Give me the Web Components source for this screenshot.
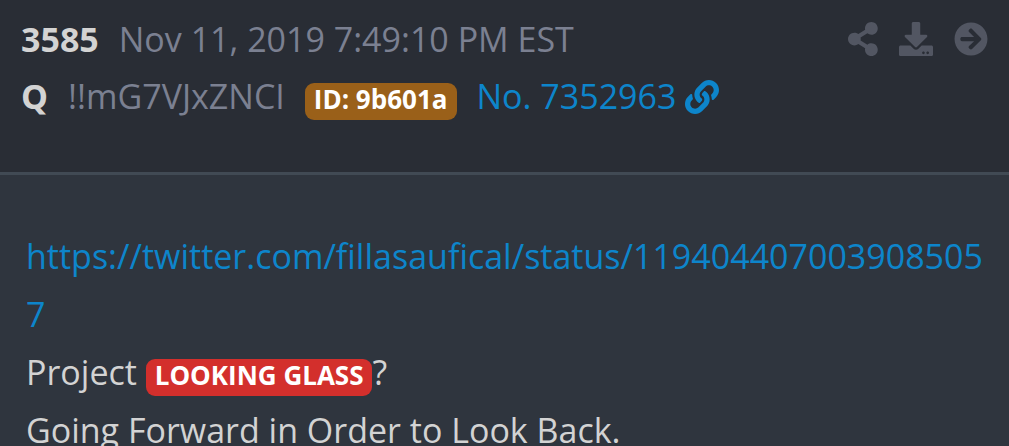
<!DOCTYPE html>
<html lang="en">
<head>
<meta charset="utf-8">
<meta name="viewport" content="width=device-width, initial-scale=1">
<title>3585</title>
<style>
	:root {
		--head: #292d35;
		--body: #2f353e;
		--line: #414a54;
		--text: #d3d3d3;
		--muted: #7b8091;
		--link: #0d85cb;
		--icon: #525662;
	}
	body {
		margin: 0;
		background: var(--body);
		color: var(--text);
		font: 34px/58px "Open Sans", sans-serif;
	}
</style>
</head>
<body>

<post-card>
	<post-header slot="header" number="3585" date="Nov 11, 2019 7:49:10 PM EST" name="Q" trip="!!mG7VJxZNCI" user="9b601a" post="7352963"></post-header>
	<post-link href="https://twitter.com/fillasaufical/status/1194044070039085057">https://twitter.com/fillasaufical/status/1194044070039085057</post-link>
	<div>Project <post-badge style="--badge: #d32f2c">LOOKING GLASS</post-badge>?</div>
	<div>Going Forward in Order to Look Back.</div>
</post-card>

<script>
const icons = {
	share: ["0 0 448 512", "M352 320c-22.608 0-43.387 7.819-59.79 20.895l-102.486-64.054a96.551 96.551 0 0 0 0-41.683l102.486-64.054C308.613 184.181 329.392 192 352 192c53.019 0 96-42.981 96-96S405.019 0 352 0s-96 42.981-96 96c0 7.158.79 14.13 2.276 20.841L155.79 180.895C139.387 167.819 118.608 160 96 160c-53.019 0-96 42.981-96 96s42.981 96 96 96c22.608 0 43.387-7.819 59.79-20.895l102.486 64.054A96.301 96.301 0 0 0 256 416c0 53.019 42.981 96 96 96s96-42.981 96-96-42.981-96-96-96z"],
	download: ["0 0 512 512", "M216 0h80c13.3 0 24 10.7 24 24v168h87.7c17.8 0 26.7 21.5 14.1 34.1L269.7 378.3c-7.5 7.5-19.8 7.5-27.3 0L90.1 226.1c-12.6-12.6-3.7-34.1 14.1-34.1H192V24c0-13.3 10.7-24 24-24zm296 376v112c0 13.3-10.7 24-24 24H24c-13.3 0-24-10.7-24-24V376c0-13.3 10.7-24 24-24h146.7l49 49c20.1 20.1 52.5 20.1 72.6 0l49-49H488c13.3 0 24 10.7 24 24zm-124 88c0-11-9-20-20-20s-20 9-20 20 9 20 20 20 20-9 20-20zm64 0c0-11-9-20-20-20s-20 9-20 20 9 20 20 20 20-9 20-20z"],
	arrow: ["0 0 512 512", "M256 8c137 0 248 111 248 248S393 504 256 504 8 393 8 256 119 8 256 8zm-28.9 143.6l75.5 72.4H120c-13.3 0-24 10.7-24 24v16c0 13.3 10.7 24 24 24h182.6l-75.5 72.4c-9.7 9.3-9.9 24.8-.4 34.3l11 10.9c9.4 9.4 24.6 9.4 33.9 0L404.3 273c9.4-9.4 9.4-24.6 0-33.9L271.6 106.3c-9.4-9.4-24.6-9.4-33.9 0l-11 10.9c-9.5 9.6-9.3 25.1.4 34.4z"],
	link: ["0 0 512 512", "M326.612 185.391c59.747 59.809 58.927 155.698.36 214.59-.11.12-.24.25-.36.37l-67.2 67.2c-59.27 59.27-155.699 59.262-214.96 0-59.27-59.26-59.27-155.7 0-214.96l37.106-37.106c9.84-9.84 26.786-3.3 27.294 10.606.648 17.722 3.826 35.527 9.69 52.721 1.986 5.822.567 12.262-3.783 16.612l-13.087 13.087c-28.026 28.026-28.905 73.66-1.155 101.96 28.024 28.579 74.086 28.749 102.325.51l67.2-67.19c28.191-28.191 28.073-73.757 0-101.83-3.701-3.694-7.429-6.564-10.341-8.569a16.037 16.037 0 0 1-6.947-12.606c-.396-10.567 3.348-21.456 11.698-29.806l21.054-21.055c5.521-5.521 14.182-6.199 20.584-1.731a152.482 152.482 0 0 1 20.522 17.197zM467.547 44.449c-59.261-59.262-155.69-59.27-214.96 0l-67.2 67.2c-.12.12-.25.25-.36.37-58.566 58.892-59.387 154.781.36 214.59a152.454 152.454 0 0 0 20.521 17.196c6.402 4.468 15.064 3.789 20.584-1.731l21.054-21.055c8.35-8.35 12.094-19.239 11.698-29.806a16.037 16.037 0 0 0-6.947-12.606c-2.912-2.005-6.64-4.875-10.341-8.569-28.073-28.073-28.191-73.639 0-101.83l67.2-67.19c28.239-28.239 74.3-28.069 102.325.51 27.75 28.3 26.872 73.934-1.155 101.96l-13.087 13.087c-4.35 4.35-5.769 10.79-3.783 16.612 5.864 17.194 9.042 34.999 9.69 52.721.509 13.906 17.454 20.446 27.294 10.606l37.106-37.106c59.271-59.259 59.271-155.699.001-214.959z"]
};

class PostIcon extends HTMLElement {
	connectedCallback() {
		if(this.shadowRoot) return;
		const [box, path] = icons[this.getAttribute("name")];
		this.attachShadow({mode: "open"}).innerHTML = `
			<style>
				:host { display: inline-block; }
				svg { display: block; height: 34px; fill: currentColor; }
			</style>
			<svg viewBox="${box}" aria-hidden="true"><path d="${path}"/></svg>
		`;
	}
}

class PostBadge extends HTMLElement {
	constructor() {
		super();
		this.attachShadow({mode: "open"}).innerHTML = `
			<style>
				:host {
					display: inline-block;
					padding: 3px 9px 8px;
					border-radius: 9px;
					background: var(--badge);
					color: white;
					font-size: 26px;
					font-weight: 700;
					line-height: 26px;
					white-space: nowrap;
				}
			</style>
			<slot></slot>
		`;
	}
}

class PostLink extends HTMLElement {
	connectedCallback() {
		if(this.shadowRoot) return;
		this.attachShadow({mode: "open"}).innerHTML = `
			<style>
				:host { display: block; word-break: break-all; }
				a { color: var(--link); text-decoration: none; }
				a:hover { text-decoration: underline; }
			</style>
			<a href="${this.getAttribute("href")}"><slot></slot></a>
		`;
	}
}

class PostHeader extends HTMLElement {
	connectedCallback() {
		if(this.shadowRoot) return;
		const get = (name) => this.getAttribute(name);
		this.attachShadow({mode: "open"}).innerHTML = `
			<style>
				:host { display: block; line-height: 57px; }
				header {
					display: flex;
					justify-content: space-between;
					align-items: flex-start;
					gap: 20px;
					padding: 11px 21px 47px;
				}
				.row {
					display: flex;
					flex-wrap: wrap;
					align-items: baseline;
					column-gap: 20px;
					color: var(--muted);
				}
				strong { color: var(--text); }
				.number { display: flex; align-items: center; gap: 9px; color: var(--link); text-decoration: none; }
				nav { display: flex; gap: 21px; padding-top: 11px; }
				button { padding: 0; border: 0; background: none; color: var(--icon); cursor: pointer; }
				button:hover { color: var(--muted); }
			</style>
			<header>
				<div>
					<div class="row">
						<strong>${get("number")}</strong>
						<time>${get("date")}</time>
					</div>
					<div class="row">
						<strong>${get("name")}</strong>
						<span>${get("trip")}</span>
						<post-badge style="--badge: #9a6019">ID: ${get("user")}</post-badge>
						<a class="number" href="#${get("post")}">No. ${get("post")} <post-icon name="link"></post-icon></a>
					</div>
				</div>
				<nav>
					<button type="button" aria-label="Share"><post-icon name="share"></post-icon></button>
					<button type="button" aria-label="Download"><post-icon name="download"></post-icon></button>
					<button type="button" aria-label="Open"><post-icon name="arrow"></post-icon></button>
				</nav>
			</header>
		`;
	}
}

class PostCard extends HTMLElement {
	constructor() {
		super();
		this.attachShadow({mode: "open"}).innerHTML = `
			<style>
				:host { display: block; }
				.head { background: var(--head); border-bottom: 3px solid var(--line); }
				.text { padding: 52px 26px; }
			</style>
			<div class="head"><slot name="header"></slot></div>
			<div class="text"><slot></slot></div>
		`;
	}
}

window.customElements.define("post-icon", PostIcon);
window.customElements.define("post-badge", PostBadge);
window.customElements.define("post-link", PostLink);
window.customElements.define("post-header", PostHeader);
window.customElements.define("post-card", PostCard);
</script>
</body>
</html>
